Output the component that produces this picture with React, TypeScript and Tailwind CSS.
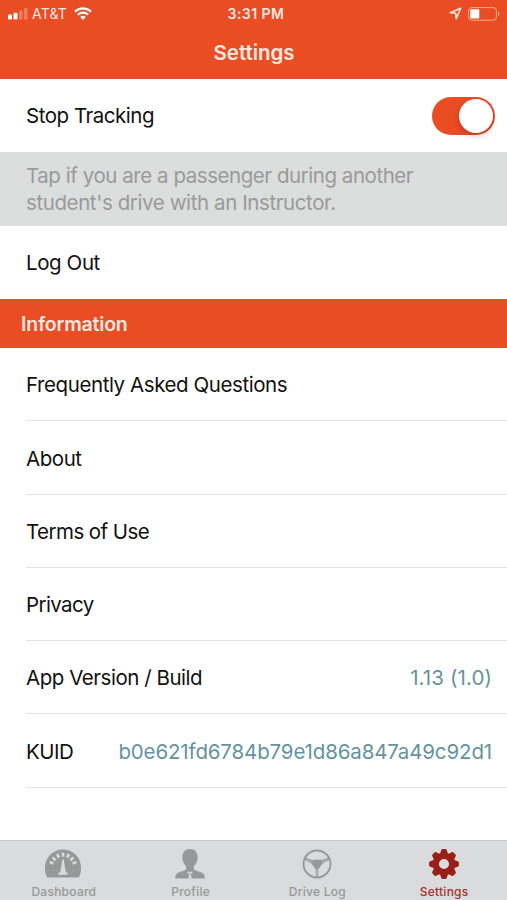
import { useState } from "react";

type Tab = "dashboard" | "profile" | "drivelog" | "settings";

const infoRows = [
  { label: "Frequently Asked Questions", tracking: "tracking-[-0.42px]" },
  { label: "About", tracking: "tracking-[-0.45px]" },
  { label: "Terms of Use", tracking: "tracking-[-0.55px]" },
  { label: "Privacy", tracking: "tracking-[-0.6px]" },
  { label: "App Version / Build", tracking: "tracking-[-0.46px]", value: "1.13 (1.0)", valueTracking: "tracking-[0.1px]" },
  { label: "KUID", tracking: "tracking-[-0.5px]", value: "b0e621fd6784b79e1d86a847a49c92d1", valueTracking: "tracking-[-0.14px]" },
];

function StatusBar() {
  return (
    <div className="grid h-[27px] grid-cols-3 items-center px-[7px] text-[#ffe9e0]">
      <div className="flex items-center">
        <svg width="21" height="13" viewBox="0 0 21 13" fill="currentColor">
          <rect x="1" y="7.5" width="4" height="5" rx="1" fill="#fff" />
          <rect x="6.5" y="5.8" width="4" height="6.7" rx="1" fill="#fff" />
          <rect x="12" y="3.5" width="3.6" height="9" rx="1" opacity="0.3" />
          <rect x="17" y="1" width="3.6" height="11.5" rx="1" opacity="0.3" />
        </svg>
        <span className="ml-[4px] text-[14px] leading-[18px] tracking-[0.2px]">AT&amp;T</span>
        <svg className="ml-[7px]" width="18" height="13" viewBox="0 0 18 13" fill="none" stroke="#fff" strokeWidth="2.2">
          <path d="M1 4.7a11.3 11.3 0 0 1 16 0" />
          <path d="M3.9 7.7a7.2 7.2 0 0 1 10.2 0" />
          <path d="M9 13 6.2 10.1a4 4 0 0 1 5.6 0Z" fill="#fff" stroke="none" />
        </svg>
      </div>
      <div className="pl-[5px] text-center text-[14px] leading-[20px] font-semibold tracking-[0.45px]">3:31 PM</div>
      <div className="flex items-center justify-end">
        <svg width="13" height="13" viewBox="0 0 12 12" fill="none" stroke="currentColor" strokeWidth="1.5" strokeLinejoin="round">
          <path d="M10.8 1.2 1.2 5.3 6.2 5.8 6.7 10.8Z" />
        </svg>
        <svg className="ml-[6px]" width="32" height="14" viewBox="0 0 32 14" fill="none">
          <rect x="0.6" y="0.6" width="27.8" height="12.6" rx="3" stroke="#ffab8c" strokeWidth="1" />
          <rect x="2.3" y="2.3" width="9" height="9.2" rx="1" fill="#fff" />
          <path d="M30 4.7c1.6.6 1.6 4 0 4.6Z" fill="#ffab8c" />
        </svg>
      </div>
    </div>
  );
}

function DashboardIcon() {
  return (
    <svg width="36" height="30" viewBox="0 0 36 30">
      <path d="M2.2 28.6A17.6 17.6 0 0 1 0 18.5 18 18 0 0 1 36 18.5a17.6 17.6 0 0 1-2.2 10.1Z" fill="#979999" />
      <path
        d="M4.6 12.8 8.4 14.6M7.7 8.3l2.8 3M12.2 5l1.6 3.6M18 3.7v4M23.8 5l-1.6 3.6M28.3 8.3l-2.8 3M31.4 12.8l-3.8 1.8"
        stroke="#d9dbdc"
        strokeWidth="2.6"
      />
      <path d="M17.3 10.5h1.4l2.1 13h1.7v2.3h-9v-2.3h1.7Z" fill="#d9dbdc" />
    </svg>
  );
}

function ProfileIcon() {
  return (
    <svg width="30" height="30" viewBox="0 0 30 30">
      <path
        d="M15 0c4.8 0 7.6 3.3 7.6 8 0 4.2-1.5 7.3-3.7 9.2v3.2c1.2 1.3 5.9 1.9 8.6 3.5 1.9 1.1 2.2 3 2.3 5.7H.2c.1-2.7.4-4.6 2.3-5.7 2.7-1.6 7.4-2.2 8.6-3.5v-3.2C8.9 15.3 7.4 12.2 7.4 8 7.4 3.3 10.2 0 15 0Z"
        fill="#979999"
      />
      <path d="m12.7 22.3 2.3 1 2.3-1v2.7L15 24.2l-2.3.8ZM14.3 25h1.4l1.1 4.6h-3.6Z" fill="#d9dbdc" />
    </svg>
  );
}

function WheelIcon() {
  return (
    <svg width="30" height="30" viewBox="0 0 30 30" fill="none">
      <circle cx="15" cy="15" r="13.5" stroke="#979999" strokeWidth="1.9" />
      <path d="M2.3 8.6 10.4 11c2.6-.8 6.600-.8 9.200 0l8.100-2.400.5 1.7-7.700 4.200-4.300 6v7h-2.400v-7l-4.300-6-7.700-4.200Z" fill="#979999" />
      <path d="m5 10.8 5.3 2M25 10.8l-5.3 2M15 20.500v6.500" stroke="#d0d2d2" strokeWidth=".7" />
    </svg>
  );
}

function GearIcon() {
  return (
    <svg width="30" height="30" viewBox="-15 -15 30 30" fill="#991f18">
      <circle r="8.2" fill="none" stroke="#991f18" strokeWidth="6.2" />
      {[0, 45, 90, 135, 180, 225, 270, 315].map((angle) => (
        <path key={angle} d="M-4.2-9.5-2.8-13.7Q-2.5-14.9-1.3-14.9H1.3Q2.5-14.9 2.8-13.7L4.2-9.5Z" transform={`rotate(${angle})`} />
      ))}
    </svg>
  );
}

const tabs = [
  { id: "dashboard" as Tab, label: "Dashboard", Icon: DashboardIcon },
  { id: "profile" as Tab, label: "Profile", Icon: ProfileIcon },
  { id: "drivelog" as Tab, label: "Drive Log", Icon: WheelIcon },
  { id: "settings" as Tab, label: "Settings", Icon: GearIcon },
];

export default function App() {
  const [tracking, setTracking] = useState(true);
  const [active, setActive] = useState<Tab>("settings");

  return (
    <div className="flex h-[900px] w-[507px] flex-col overflow-hidden bg-white font-['Inter',sans-serif] text-[20.5px] text-[#111]">
      <header className="h-[79px] shrink-0 bg-[#ea4c24]">
        <StatusBar />
        <h1 className="pl-px text-center text-[20.5px] leading-[51px] font-semibold tracking-[-0.05px] text-[#ffe9e0]">Settings</h1>
      </header>

      <main className="flex-1">
        <div className="flex h-[73px] items-center justify-between pr-[12px] pl-[26px]">
          <span className="pt-[2px] tracking-[-0.47px]">Stop Tracking</span>
          <button
            role="switch"
            aria-checked={tracking}
            onClick={() => setTracking(!tracking)}
            className={`flex h-[38px] w-[63px] items-center rounded-full p-[2px] ${tracking ? "justify-end bg-[#ea4c24]" : "justify-start bg-gray-300"}`}
          >
            <span className="size-[34px] rounded-full bg-white shadow-[0_3px_6px_rgba(0,0,0,0.2)]" />
          </button>
        </div>

        <p className="h-[73.5px] bg-[#dcdddd] pt-[10px] pl-[26px] leading-[27px] tracking-[-0.45px] text-[#999a9a]">
          Tap if you are a passenger during another
          <br />
          <span className="tracking-[-0.4px]">student's drive with an Instructor.</span>
        </p>

        <button className="flex h-[73.5px] w-full items-center pt-[2px] pl-[26px] tracking-[-0.4px]">Log Out</button>

        <h2 className="h-[49px] bg-[#ea4c24] pl-[21px] text-[19.5px] leading-[50px] font-semibold tracking-[-0.2px] text-[#ffe9e0]">
          Information
        </h2>

        <ul>
          {infoRows.map((row) => (
            <li key={row.label} className="ml-[26px] flex h-[73.3px] items-center justify-between border-b border-[#e4e4e4] pt-[3px] pr-[15px]">
              <span className={row.tracking}>{row.label}</span>
              {row.value && <span className={`text-[#64939f] ${row.valueTracking}`}>{row.value}</span>}
            </li>
          ))}
        </ul>
      </main>

      <nav className="grid h-[60px] shrink-0 grid-cols-4 border-t border-[#c9cbcb] bg-[#d9dbdc]">
        {tabs.map(({ id, label, Icon }) => (
          <button key={id} onClick={() => setActive(id)} className="flex flex-col items-center pt-[8px]">
            <Icon />
            <span
              className={`mt-[5px] pl-px text-[12px] leading-[15px] font-medium tracking-[0.25px] ${active === id ? "text-[#a8322e]" : "text-[#979999]"}`}
            >
              {label}
            </span>
          </button>
        ))}
      </nav>
    </div>
  );
}
